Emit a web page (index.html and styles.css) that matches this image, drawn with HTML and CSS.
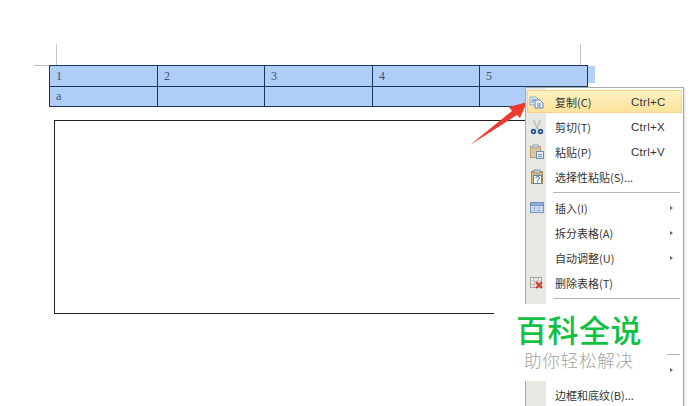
FILE: index.html
```html
<!DOCTYPE html>
<html lang="zh">
<head>
<meta charset="utf-8">
<title>复制表格</title>
<link rel="stylesheet" href="styles.css">
</head>
<body>
<main class="page">
  <section class="doc">
    <div class="crop-row"></div>
    <div class="table-wrap">
      <table class="grid">
        <colgroup><col class="c1"><col class="c2"><col class="c1"><col class="c2"><col class="c1"></colgroup>
        <tr class="r1"><td>1</td><td>2</td><td>3</td><td>4</td><td>5</td></tr>
        <tr class="r2"><td>a</td><td></td><td></td><td></td><td></td></tr>
      </table>
    </div>
    <div class="textbox"></div>
  </section>

  <svg class="pointer" viewBox="0 0 64 50" width="64" height="50" aria-hidden="true">
    <path d="M3 48 L45 14 L42 10 L60 5 L53 21 L50 18 Z" fill="#ec3a30"/>
  </svg>

  <nav class="menu">
    <div class="item active">
      <svg class="ico" viewBox="0 0 16 16"><path d="M1 3h6l2 2v6H1z" fill="#e6ebf2" stroke="#8ea6c4"/><path d="M6 6h5l3 3v5H6z" fill="#f4f7fb" stroke="#5f83b0"/><path d="M2.500 6h4M2.500 8h2M8 10h4M8 12h4" stroke="#4f76a8"/></svg>
      <span class="label">复制(C)</span><span class="key">Ctrl+C</span>
    </div>
    <div class="item">
      <svg class="ico" viewBox="0 0 16 16"><path d="M4.500 1l4 9M11.500 1L7.500 10" stroke="#b9bcc2" stroke-width="1.600" fill="none"/><circle cx="4.500" cy="12.500" r="1.900" fill="none" stroke="#24508f" stroke-width="1.700"/><circle cx="11.500" cy="12.500" r="1.900" fill="none" stroke="#24508f" stroke-width="1.700"/></svg>
      <span class="label">剪切(T)</span><span class="key">Ctrl+X</span>
    </div>
    <div class="item">
      <svg class="ico" viewBox="0 0 16 16"><rect x="1.500" y="2.500" width="10" height="11" fill="#dcc996" stroke="#b6a26c"/><rect x="4" y="1" width="5" height="3" fill="#d2d4d8" stroke="#a2a4a9"/><rect x="7.500" y="7.500" width="7" height="7" fill="#e8eff8" stroke="#6b8db8"/><path d="M9 10.500h4M9 12.500h4" stroke="#6b8db8"/></svg>
      <span class="label">粘贴(P)</span><span class="key">Ctrl+V</span>
    </div>
    <div class="item">
      <svg class="ico" viewBox="0 0 16 16"><rect x="2.500" y="2.500" width="11" height="12" fill="#dcbf78" stroke="#a08a55"/><rect x="5" y="1" width="6" height="3" fill="#d2d4d8" stroke="#8c8f96"/><rect x="4.500" y="6.500" width="8" height="8" fill="#f5f8fc" stroke="#5f83b0"/><path d="M7 9c0-2 3.500-2 3.500 0 0 1.300-2 1.300-2 2.500M8.500 12.500v1" stroke="#2456a8" fill="none"/></svg>
      <span class="label">选择性粘贴(S)...</span>
    </div>
    <div class="sep"></div>
    <div class="item">
      <svg class="ico" viewBox="0 0 16 16"><rect x="1.500" y="2.500" width="13" height="10" fill="#e4eefa" stroke="#6f90ba"/><rect x="1.500" y="2.500" width="13" height="3" fill="#8fb1de" stroke="#6f90ba"/><path d="M1.500 8h13M1.500 10.500h13M5.500 5.500v7M10 5.500v7" stroke="#9db7d8"/></svg>
      <span class="label">插入(I)</span><span class="arrow"></span>
    </div>
    <div class="item"><span class="ico"></span><span class="label">拆分表格(A)</span><span class="arrow"></span></div>
    <div class="item"><span class="ico"></span><span class="label">自动调整(U)</span><span class="arrow"></span></div>
    <div class="item">
      <svg class="ico" viewBox="0 0 16 16"><rect x="1.500" y="2.500" width="11" height="10" fill="#f3f0ea" stroke="#a5a59f"/><path d="M1.500 6h11M1.500 9.500h11M5 2.500v10M9 2.500v10" stroke="#bdbab2"/><path d="M7 7l6 6M13 7l-6 6" stroke="#d8382c" stroke-width="2"/></svg>
      <span class="label">删除表格(T)</span>
    </div>
    <div class="sep"></div>
    <div class="item"></div>
    <div class="item"></div>
    <div class="sep"></div>
    <div class="item"><span class="ico"></span><span class="label"></span><span class="arrow"></span></div>
    <div class="item"><span class="ico"></span><span class="label">边框和底纹(B)...</span></div>
  </nav>

  <aside class="stamp">
    <div class="stamp-title">百科全说</div>
    <div class="stamp-sub">助你轻松解决</div>
  </aside>
</main>
</body>
</html>
```

FILE: styles.css
```css
html, body {
  margin: 0;
  padding: 0;
  height: 100%;
  overflow: hidden;
  background: #fff;
}

.page {
  position: relative;
  width: 692px;
  height: 406px;
  overflow: hidden;
  font-family: "Noto Sans CJK SC", "Liberation Sans", sans-serif;
}

.doc {
  display: flex;
  flex-direction: column;
  align-items: flex-start;
  padding: 44px 0 0 49px;
}

.crop-row {
  box-sizing: border-box;
  width: 525px;
  height: 21px;
  margin-left: 7px;
  border-left: 1px solid #c8c8c8;
  border-right: 1px solid #c8c8c8;
}

.table-wrap {
  position: relative;
}

.table-wrap::before {
  content: "";
  position: absolute;
  left: -15px;
  top: 0;
  width: 15px;
  height: 1px;
  background: #bdbdbd;
}

.table-wrap::after {
  content: "";
  position: absolute;
  left: 100%;
  top: 1px;
  width: 7px;
  height: 17px;
  background: #b4d0f8;
}

.grid {
  border-collapse: collapse;
  table-layout: fixed;
  width: 538px;
  background: #b0cdf7;
  font-family: "Liberation Serif", serif;
  color: #35557f;
}

.c1 { width: 108px; }
.c2 { width: 107px; }

.grid td {
  box-sizing: border-box;
  padding: 0 0 0 6px;
  border: 1px solid #17375e;
  vertical-align: middle;
}

.r1 td { height: 21px; font-size: 12px; }
.r2 td { height: 20px; font-size: 12px; }

.textbox {
  box-sizing: border-box;
  width: 526px;
  height: 194px;
  margin: 13px 0 0 5px;
  border: 1px solid #222;
}

.pointer {
  position: absolute;
  left: 467px;
  top: 97px;
}

.menu {
  position: absolute;
  left: 525px;
  top: 87px;
  box-sizing: border-box;
  width: 159px;
  padding: 1px 1px 0;
  border: 1px solid #a9a9a9;
  background: linear-gradient(to right, #e8e8e3 0, #e8e8e3 20px, #fff 20px);
  box-shadow: 1px 1px 2px rgba(0, 0, 0, .15);
  font-size: 11px;
  color: #333;
}

.item {
  display: flex;
  align-items: center;
  box-sizing: border-box;
  height: 25px;
  padding: 0 9px 0 2px;
}

.item.active {
  height: 23px;
  margin: 1px 0;
  background: linear-gradient(#fff2c4, #fbe29a);
  box-shadow: inset 0 0 0 1px #f1d48a;
}

.ico {
  flex: none;
  width: 16px;
  height: 16px;
  margin-right: 10px;
}

.label {
  flex: 1;
  white-space: nowrap;
}

.key {
  flex: none;
  width: 42px;
  font-family: "Liberation Sans", sans-serif;
  font-size: 11.500px;
  letter-spacing: .300px;
  white-space: nowrap;
}

.arrow {
  flex: none;
  width: 0;
  height: 0;
  border-left: 3px solid #666;
  border-top: 2.500px solid transparent;
  border-bottom: 2.500px solid transparent;
}

.sep {
  display: flex;
  align-items: center;
  height: 6px;
  margin-left: 26px;
  margin-right: 2px;
}

.sep::before {
  content: "";
  flex: 1;
  height: 1px;
  background: #b5b5b5;
}

.stamp {
  position: absolute;
  left: 494px;
  top: 304px;
  box-sizing: border-box;
  width: 173px;
  height: 77px;
  display: flex;
  flex-direction: column;
  align-items: flex-start;
  gap: 2px;
  background: #fff;
}

.stamp-title {
  margin: 6px 0 0 22px;
  font-size: 31px;
  line-height: 37px;
  font-weight: 500;
  letter-spacing: .500px;
  color: #12c143;
  white-space: nowrap;
}

.stamp-sub {
  margin: 0 0 0 30px;
  font-size: 17.500px;
  font-weight: 300;
  line-height: 22px;
  letter-spacing: .800px;
  color: #a3a3a3;
  white-space: nowrap;
}
```
